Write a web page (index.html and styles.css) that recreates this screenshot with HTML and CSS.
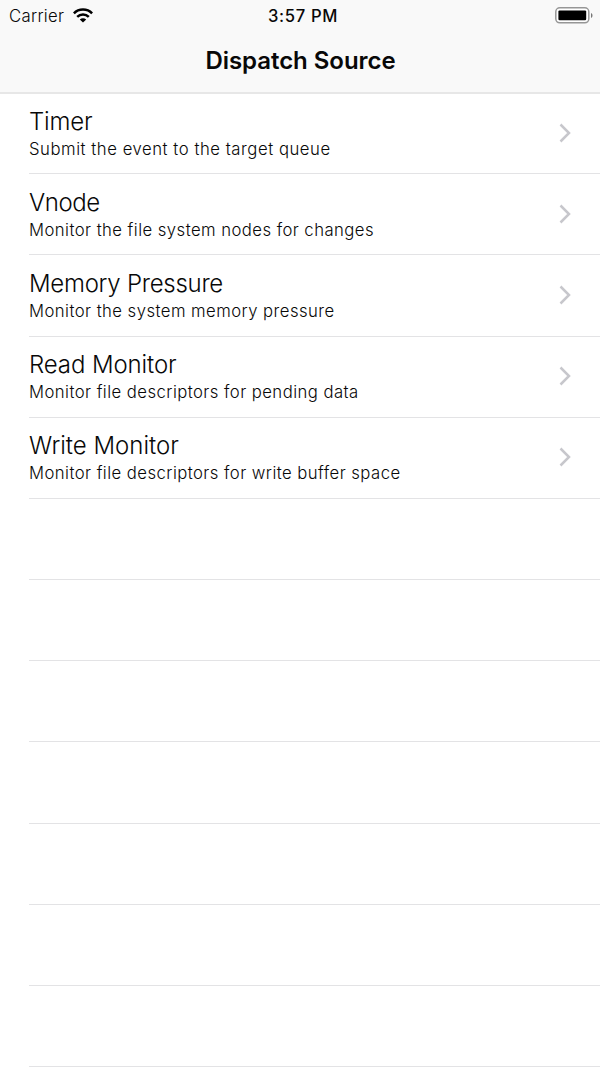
FILE: index.html
```html
<!DOCTYPE html>
<html lang="en">
<head>
<meta charset="utf-8">
<title>Dispatch Source</title>
<link rel="stylesheet" href="styles.css">
</head>
<body>
<header class="header">
  <div class="status">
    <div class="carrier"><span class="carrier-name">Carrier</span>
      <svg class="wifi" width="20" height="15" viewBox="0 0 20 15"><g fill="none" stroke="#000" stroke-width="2.5"><path d="M.9 5.3C5.8.3 14.2.3 19.1 5.3"/><path d="M4.2 8.800c3.200-3.200 8.400-3.200 11.600 0"/></g><path d="M6.800 11.500c1.800-1.600 4.600-1.600 6.400 0L10 14.500z"/></svg>
    </div>
    <span class="time">3:57 PM</span>
    <svg class="battery" width="38" height="17" viewBox="0 0 38 17"><rect x=".8" y=".8" width="33" height="15" rx="4" fill="#fff" stroke="#969696" stroke-width="1.5"/><rect x="3.4" y="3.4" width="27.8" height="9.8" rx="1.2"/><path d="M36 6c2 .9 2 4 0 4.900z" fill="#777"/></svg>
  </div>
  <h1 class="title">Dispatch Source</h1>
</header>
<main class="list">
  <div class="row"><div class="text"><div class="name timer">Timer</div><div class="detail timer-detail">Submit the event to the target queue</div></div><svg class="chevron" width="14" height="20" viewBox="0 0 14 20"><path d="M2.500 1.500l8.500 8.500-8.500 8.500"/></svg></div>
  <div class="row"><div class="text"><div class="name vnode">Vnode</div><div class="detail">Monitor the file system nodes for changes</div></div><svg class="chevron" width="14" height="20" viewBox="0 0 14 20"><path d="M2.500 1.500l8.500 8.500-8.500 8.500"/></svg></div>
  <div class="row"><div class="text"><div class="name memory">Memory Pressure</div><div class="detail">Monitor the system memory pressure</div></div><svg class="chevron" width="14" height="20" viewBox="0 0 14 20"><path d="M2.500 1.500l8.500 8.500-8.500 8.500"/></svg></div>
  <div class="row lower"><div class="text"><div class="name read">Read Monitor</div><div class="detail">Monitor file descriptors for pending data</div></div><svg class="chevron" width="14" height="20" viewBox="0 0 14 20"><path d="M2.500 1.500l8.500 8.500-8.500 8.500"/></svg></div>
  <div class="row lower"><div class="text"><div class="name write">Write Monitor</div><div class="detail">Monitor file descriptors for write buffer space</div></div><svg class="chevron" width="14" height="20" viewBox="0 0 14 20"><path d="M2.500 1.500l8.500 8.500-8.500 8.500"/></svg></div>
  <div class="row"></div><div class="row"></div><div class="row"></div><div class="row"></div><div class="row"></div><div class="row"></div><div class="row"></div>
</main>
</body>
</html>
```
FILE: styles.css
```css
* { box-sizing: border-box; }
body { margin: 0; height: 1067px; overflow: hidden; background: #fff; color: #080808; font-family: Inter, "Liberation Sans", sans-serif; }
.header { height: 94px; background: #f9f9f9; border-bottom: 2px solid #e7e7e7; }
.status { display: grid; grid-template-columns: 1fr auto 1fr; align-items: center; height: 30px; padding: 0 7px 0 9px; }
.carrier { display: flex; align-items: center; gap: 8.5px; }
.carrier-name { font-size: 16.7px; line-height: 20px; font-weight: 300; letter-spacing: .3px; padding-top: 1px; }
.time { font-size: 16.6px; line-height: 20px; font-weight: 500; letter-spacing: .65px; padding: 1px 0 0 4px; }
.battery { justify-self: end; }
.title { margin: 16px 0 0; padding-left: 1px; text-align: center; font-size: 24px; line-height: 30px; font-weight: 600; letter-spacing: -.05px; }
.list { padding-left: 29px; }
.row { display: flex; height: 81.16px; padding-right: 28px; justify-content: space-between; border-bottom: 1px solid #e3e3e5; }
.row:first-child { height: 80.3px; }
.row:first-child .text { padding-top: 13px; }
.row:first-child .chevron { margin-top: 29px; }
.text { padding: 14px 0 0; }
.name { font-size: 24px; line-height: 30px; font-weight: 300; }
.timer { letter-spacing: -.2px; }
.vnode { letter-spacing: -.4px; }
.memory { letter-spacing: -.27px; }
.read { letter-spacing: -.1px; }
.detail { font-size: 16.7px; line-height: 24px; font-weight: 300; letter-spacing: .45px; }
.timer-detail { letter-spacing: .54px; }
.chevron { margin-top: 30px; fill: none; stroke: #c7c7cc; stroke-width: 2.5; }
.lower .text { padding-top: 13.3px; }
.lower .chevron { margin-top: 29.3px; }
```
